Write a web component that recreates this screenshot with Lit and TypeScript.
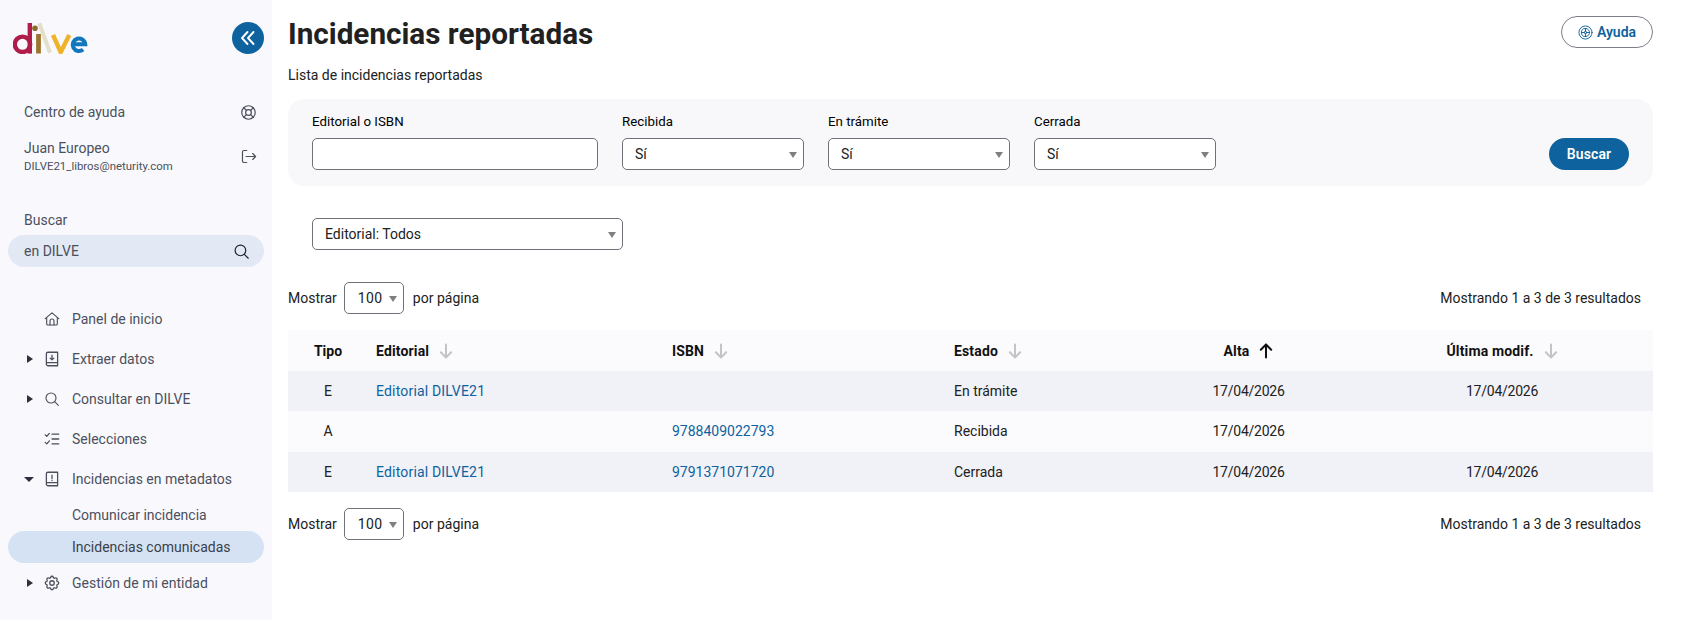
import { LitElement, html, css, svg } from "lit";
import { customElement } from "lit/decorators.js";

const ic = (body: unknown, size = 18) => html`<svg width=${size} height=${size} viewBox="0 0 24 24" fill="none" stroke="currentColor" stroke-width="1.700" stroke-linecap="round" stroke-linejoin="round">${body}</svg>`;
const nic = (body: unknown, size = 18) => html`<span class="ico">${ic(body, size)}</span>`;

const lifebuoy = svg`<circle cx="12" cy="12" r="4"/><circle cx="12" cy="12" r="9.500"/><path d="M15 15l4 4M5 19l4-4M5 5l4 4M19 5l-4 4"/>`;
const wheel = svg`<circle cx="12" cy="12" r="10.500" stroke-width="1.500"/><circle cx="12" cy="12" r="6.500" stroke-width="1.500"/><circle cx="12" cy="12" r="2" stroke-width="1.500"/><path stroke-width="1.500" d="M12 5.500v4.500M12 14v4.500M5.500 12H10M14 12h4.500"/>`;
const logout = svg`<path d="M9.500 3.500H5.500a2 2 0 0 0-2 2v13a2 2 0 0 0 2 2h4"/><path d="M8.500 12h13.500M18 7.800l4 4.200-4 4.200"/>`;
const search = svg`<circle cx="10.500" cy="10.500" r="7.500"/><path d="M16 16l5.500 5.500"/>`;
const home = svg`<path d="M1.800 11.500L12 2.800l10.200 8.700"/><path d="M4 9.800V19a2 2 0 0 0 2 2h12a2 2 0 0 0 2-2V9.800"/><path d="M9 21v-6a3 3 0 0 1 6 0v6"/>`;
const bookDown = svg`<path d="M4.500 18V5a2 2 0 0 1 2-2h13v18h-13a2.500 2.500 0 0 1-2-3.200c.300-.700 1-1 2-1h13"/><path d="M12 7v6M9.500 10.800L12 13.200l2.500-2.400"/>`;
const bookAlert = svg`<path d="M4.500 18V5a2 2 0 0 1 2-2h13v18h-13a2.500 2.500 0 0 1-2-3.200c.300-.700 1-1 2-1h13"/><path d="M12 7v4.500M12 14v.100"/>`;
const checks = svg`<path d="M3 6.500l2 2 3.500-4M3 16.500l2 2 3.500-4M12 5.500h9M12 12h9M12 18.500h9"/>`;
const gear = svg`<path d="M10.325 4.317c.426-1.756 2.924-1.756 3.350 0a1.724 1.724 0 0 0 2.573 1.066c1.543-.94 3.310.826 2.370 2.370a1.724 1.724 0 0 0 1.065 2.572c1.756.426 1.756 2.924 0 3.350a1.724 1.724 0 0 0-1.066 2.573c.94 1.543-.826 3.310-2.370 2.370a1.724 1.724 0 0 0-2.572 1.065c-.426 1.756-2.924 1.756-3.350 0a1.724 1.724 0 0 0-2.573-1.066c-1.543.94-3.310-.826-2.370-2.370a1.724 1.724 0 0 0-1.065-2.572c-1.756-.426-1.756-2.924 0-3.350a1.724 1.724 0 0 0 1.066-2.573c-.94-1.543.826-3.310 2.370-2.370c1 .608 2.296.07 2.572-1.065z"/><circle cx="12" cy="12" r="3"/>`;
const arrowDown = html`<svg width="14" height="16" viewBox="0 0 14 16" fill="none" stroke="#c4c4c8" stroke-width="2" stroke-linecap="round" stroke-linejoin="round"><path d="M7 1.500v13M1.800 9.200L7 14.500l5.200-5.300"/></svg>`;
const arrowUp = html`<svg width="14" height="16" viewBox="0 0 14 16" fill="none" stroke="#111" stroke-width="2" stroke-linecap="round" stroke-linejoin="round"><path d="M7 14.500v-13M1.800 6.800L7 1.500l5.200 5.300"/></svg>`;

const logo = html`<svg width="76" height="32" viewBox="0 0 76 32" fill="none">
  <circle cx="9.500" cy="22.300" r="7.700" stroke="#b01d4a" stroke-width="4.400"/>
  <path d="M16.800 1v30.600" stroke="#b01d4a" stroke-width="4.400"/>
  <circle cx="22" cy="6.300" r="2.800" fill="#8f6a2c"/>
  <path d="M25.500 12v19.500" stroke="#9c7430" stroke-width="4.800"/>
  <path d="M26.300 1.300L37 30.700" stroke="#e3dfcb" stroke-width="4"/>
  <path d="M40 13l7.700 17.200L56.300 13" stroke="#efb32a" stroke-width="4.400"/>
  <path d="M59.500 22.300h12.800a6.300 6.300 0 1 0-2.200 5.300" stroke="#1277bd" stroke-width="4"/>
</svg>`;

const sel = (v: string, cls: string) => html`<div class="sel ${cls}"><select><option>${v}</option></select></div>`;

@customElement("app-root")
export class AppRoot extends LitElement {
  static styles = css`
    :host { display: flex; width: 1684px; height: 620px; overflow: hidden; background: #fff; font-family: Roboto, "Liberation Sans", sans-serif; font-size: 14px; color: #212121; }
    * { box-sizing: border-box; }
    svg { display: block; flex: none; }
    .side { width: 272px; height: 620px; flex: none; background: #f9f9fd; color: #4b505c; display: flex; flex-direction: column; }
    .brand { display: flex; justify-content: space-between; align-items: center; padding: 22px 8px 0 13px; height: 54px; }
    .collapse { width: 32px; height: 32px; border-radius: 50%; background: #0e629d; color: #fff; display: flex; align-items: center; justify-content: center; }
    .help { display: flex; justify-content: space-between; align-items: center; padding: 0 15px 0 24px; margin-top: 48px; height: 20px; }
    .help svg { width: 17px; height: 17px; }
    .user { display: flex; justify-content: space-between; align-items: center; padding: 0 15px 0 24px; margin-top: 15px; height: 38px; }
    .uname { line-height: 20px; }
    .umail { font-size: 11.400px; line-height: 16px; }
    .slabel { padding-left: 24px; margin-top: 35px; line-height: 20px; height: 20px; }
    .sfield { margin: 5px 8px 0; height: 32px; border-radius: 16px; background: #e2e9f5; display: flex; justify-content: space-between; align-items: center; padding: 0 14px 0 16px; }
    .sfield svg { color: #1c2530; }
    .nav { margin-top: 32px; display: flex; flex-direction: column; }
    .item { height: 40px; display: flex; align-items: center; }
    .caret { width: 24px; margin-left: 24px; display: flex; }
    .caret i { display: block; width: 0; height: 0; border-style: solid; border-width: 4.500px 0 4.500px 6px; border-color: transparent transparent transparent #2b303a; margin-left: 3px; }
    .caret i.open { border-width: 5px 5px 0 5px; border-color: #2b303a transparent transparent transparent; margin-left: 0; }
    .ico { width: 24px; margin: 0 8px 0 -8px; display: flex; justify-content: center; }
    .sub { height: 32px; display: flex; align-items: center; padding-left: 64px; margin: 0 8px; border-radius: 16px; }
    .sub.active { background: #d5e2f4; color: #3a3f4a; }

    .main { flex: 1; min-width: 0; padding: 0 31px 0 16px; }
    .top { display: flex; justify-content: space-between; align-items: flex-start; height: 62px; }
    h1 { margin: 17px 0 0; font-size: 29.700px; line-height: 34px; font-weight: 700; color: #212121; }
    .ayuda { margin-top: 16px; height: 32px; width: 92px; border: 1px solid #7b7f8a; border-radius: 16px; color: #0e629d; font-weight: 600; display: flex; align-items: center; justify-content: center; gap: 4px; background: #fff; }
    .subtitle { line-height: 20px; height: 20px; margin-top: 3px; }
    .panel { margin-top: 14px; height: 87px; border-radius: 16px; background: #f8f8fb; padding: 13px 24px 0; display: flex; gap: 24px; }
    .f { display: flex; flex-direction: column; }
    .f label { height: 20px; line-height: 20px; margin-bottom: 6px; color: #000; font-weight: 400; font-size: 13.300px; }
    .inp { width: 286px; height: 32px; border: 1px solid #6f7279; border-radius: 5px; background: #fff; }
    .sel { position: relative; height: 32px; }
    .sel select { appearance: none; -webkit-appearance: none; width: 100%; height: 32px; border: 1px solid #6f7279; border-radius: 5px; background: #fff; font: inherit; color: #212121; padding: 0 12px; outline: none; }
    .sel::after { content: ""; position: absolute; right: 7px; top: 14px; border-style: solid; border-width: 6px 4px 0 4px; border-color: #808080 transparent transparent transparent; pointer-events: none; }
    .w182 { width: 182px; }
    .w311 { width: 311px; }
    .w60 { width: 60px; }
    .w60 select { padding-left: 13px; letter-spacing: .3px; }
    .buscar { margin-left: auto; margin-top: 26px; width: 80px; height: 32px; border-radius: 16px; background: #0e629d; color: #fff; font-weight: 600; letter-spacing: .1px; display: flex; align-items: center; justify-content: center; }
    .edit { margin: 32px 0 0 24px; }
    .pager { display: flex; align-items: center; height: 32px; }
    .pager.p1 { margin-top: 32px; }
    .pager.p2 { margin-top: 16px; }
    .pager .w60 { margin: 0 9px 0 7px; }
    .pager .res { margin-left: auto; margin-right: 12px; }
    table { border-collapse: collapse; table-layout: fixed; width: 1365px; margin-top: 16px; }
    .c1 { width: 80px; } .c2 { width: 296px; } .c3 { width: 282px; } .c4 { width: 200px; } .c5 { width: 205px; } .c6 { width: 302px; }
    th { height: 41px; background: #fbfbfe; text-align: left; padding: 0 8px; font-weight: 700; color: #111; }
    th .h { letter-spacing: .15px; }
    td { height: 40.330px; padding: 0 8px; color: #212121; }
    td.date { letter-spacing: -.25px; }
    tr:nth-child(odd) td { background: #f1f2f8; }
    tr:nth-child(even) td { background: #fbfbfe; }
    .ctr { text-align: center; }
    a { color: #0e629d; text-decoration: none; }
    a.ed { letter-spacing: .18px; }
    .h { display: inline-flex; align-items: center; gap: 10px; vertical-align: middle; }
  `;

  render() {
    const rows = [
      ["E", "Editorial DILVE21", "", "En trámite", "17/04/2026", "17/04/2026"],
      ["A", "", "9788409022793", "Recibida", "17/04/2026", ""],
      ["E", "Editorial DILVE21", "9791371071720", "Cerrada", "17/04/2026", "17/04/2026"],
    ];
    const pager = (cls: string) => html`<div class="pager ${cls}"><span>Mostrar</span>${sel("100", "w60")}<span>por página</span><span class="res">Mostrando 1 a 3 de 3 resultados</span></div>`;
    return html`
      <aside class="side">
        <div class="brand">${logo}<div class="collapse"><svg width="18" height="18" viewBox="0 0 18 18" fill="none" stroke="#fff" stroke-width="1.900" stroke-linecap="round" stroke-linejoin="round"><path d="M8.500 3L3 9l5.500 6M14.500 3L9 9l5.500 6"/></svg></div></div>
        <div class="help"><span>Centro de ayuda</span>${ic(lifebuoy)}</div>
        <div class="user"><div><div class="uname">Juan Europeo</div><div class="umail">DILVE21_libros@neturity.com</div></div>${ic(logout, 17)}</div>
        <div class="slabel">Buscar</div>
        <div class="sfield"><span>en DILVE</span>${ic(search, 17)}</div>
        <nav class="nav">
          <div class="item"><span class="caret"></span>${nic(home, 16)}<span>Panel de inicio</span></div>
          <div class="item"><span class="caret"><i></i></span>${nic(bookDown)}<span>Extraer datos</span></div>
          <div class="item"><span class="caret"><i></i></span>${nic(search, 16)}<span>Consultar en DILVE</span></div>
          <div class="item"><span class="caret"></span>${nic(checks)}<span>Selecciones</span></div>
          <div class="item"><span class="caret"><i class="open"></i></span>${nic(bookAlert)}<span>Incidencias en metadatos</span></div>
          <div class="sub">Comunicar incidencia</div>
          <div class="sub active">Incidencias comunicadas</div>
          <div class="item"><span class="caret"><i></i></span>${nic(gear)}<span>Gestión de mi entidad</span></div>
        </nav>
      </aside>
      <main class="main">
        <div class="top"><h1>Incidencias reportadas</h1><div class="ayuda">${ic(wheel, 15)}<span>Ayuda</span></div></div>
        <div class="subtitle">Lista de incidencias reportadas</div>
        <section class="panel">
          <div class="f"><label>Editorial o ISBN</label><div class="inp"></div></div>
          <div class="f"><label>Recibida</label>${sel("Sí", "w182")}</div>
          <div class="f"><label>En trámite</label>${sel("Sí", "w182")}</div>
          <div class="f"><label>Cerrada</label>${sel("Sí", "w182")}</div>
          <div class="buscar">Buscar</div>
        </section>
        <div class="edit">${sel("Editorial: Todos", "w311")}</div>
        ${pager("p1")}
        <table>
          <colgroup><col class="c1"/><col class="c2"/><col class="c3"/><col class="c4"/><col class="c5"/><col class="c6"/></colgroup>
          <thead><tr>
            <th class="ctr">Tipo</th>
            <th><span class="h">Editorial ${arrowDown}</span></th>
            <th><span class="h">ISBN ${arrowDown}</span></th>
            <th><span class="h">Estado ${arrowDown}</span></th>
            <th class="ctr"><span class="h">Alta ${arrowUp}</span></th>
            <th class="ctr"><span class="h">Última modif. ${arrowDown}</span></th>
          </tr></thead>
          <tbody>
            ${rows.map((r) => html`<tr>
              <td class="ctr">${r[0]}</td>
              <td><a class="ed">${r[1]}</a></td>
              <td><a>${r[2]}</a></td>
              <td>${r[3]}</td>
              <td class="ctr date">${r[4]}</td>
              <td class="ctr date">${r[5]}</td>
            </tr>`)}
          </tbody>
        </table>
        ${pager("p2")}
      </main>
    `;
  }
}
